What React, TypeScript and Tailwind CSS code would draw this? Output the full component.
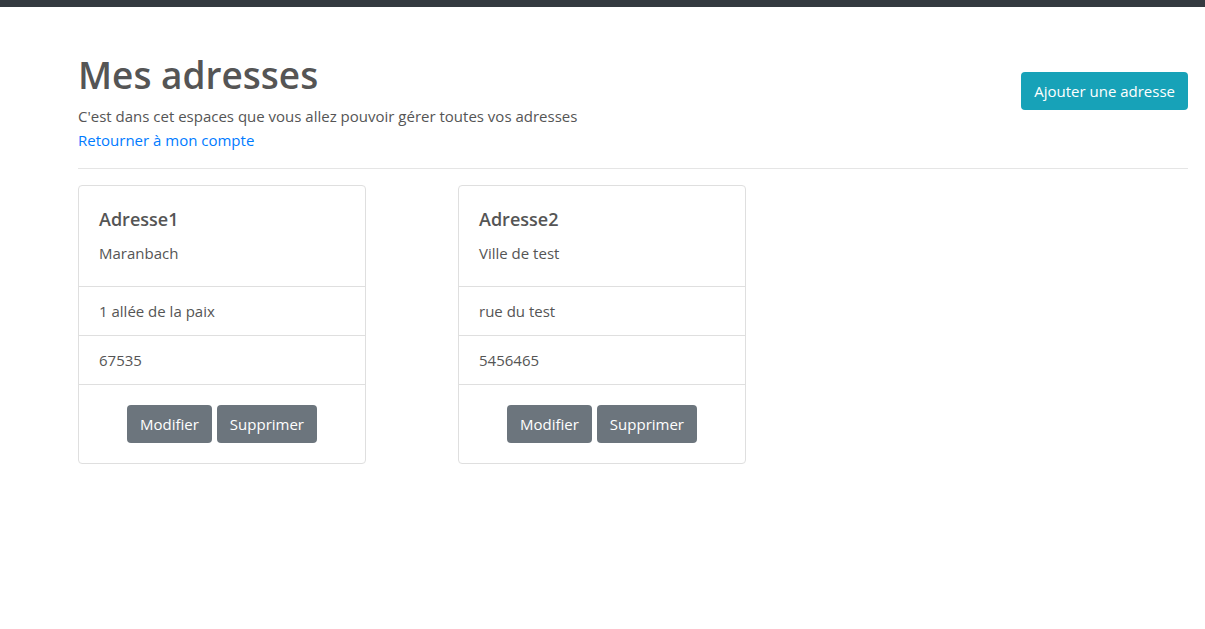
import React from 'react';

const addresses = [
  { id: 1, name: 'Adresse1', city: 'Maranbach', street: '1 allée de la paix', postal: '67535' },
  { id: 2, name: 'Adresse2', city: 'Ville de test', street: 'rue du test', postal: '5456465' },
];

function AddressCard({ address }: { address: (typeof addresses)[number] }) {
  return (
    <div className="w-[288px] rounded border border-[#dfdfdf] bg-white">
      <div className="px-5 pt-[21px] pb-[21px]">
        <h5 className="mb-[10px] text-[18px] leading-[24px] font-semibold text-[#555]">{address.name}</h5>
        <p className="text-[15px] leading-6">{address.city}</p>
      </div>
      <div className="border-t border-[#dfdfdf] px-5 py-3 text-[15px] leading-6">{address.street}</div>
      <div className="border-t border-[#dfdfdf] px-5 py-3 text-[15px] leading-6">{address.postal}</div>
      <div className="flex justify-center gap-[5px] border-t border-[#dfdfdf] p-5">
        <button className="h-[38px] rounded bg-[#6c757d] px-[13px] text-[15px] text-white">Modifier</button>
        <button className="h-[38px] rounded bg-[#6c757d] px-[13px] text-[15px] text-white">Supprimer</button>
      </div>
    </div>
  );
}

export default function App() {
  return (
    <div className="min-h-screen bg-white text-[#555]" style={{ fontFamily: '"Open Sans", "Liberation Sans", sans-serif' }}>
      <div className="h-[7px] bg-[#343a40]" />
      <div className="pl-[78px] pr-[17px]">
        <div className="flex items-start justify-between pt-[45px] pb-[16px]">
          <div>
            <h1 className="text-[37px] leading-[46px] font-semibold text-[#555]">Mes adresses</h1>
            <p className="mt-[6px] text-[15px] leading-6">C'est dans cet espaces que vous allez pouvoir gérer toutes vos adresses</p>
            <a href="#" className="text-[15px] leading-6 text-[#007bff]">Retourner à mon compte</a>
          </div>
          <button className="mt-[20px] h-[38px] rounded bg-[#17a2b8] px-[13px] text-[15px] text-white">Ajouter une adresse</button>
        </div>
        <hr className="border-[#e5e5e5]" />
        <div className="flex gap-[92px] pt-4">
          {addresses.map((a) => (
            <AddressCard key={a.id} address={a} />
          ))}
        </div>
      </div>
    </div>
  );
}
